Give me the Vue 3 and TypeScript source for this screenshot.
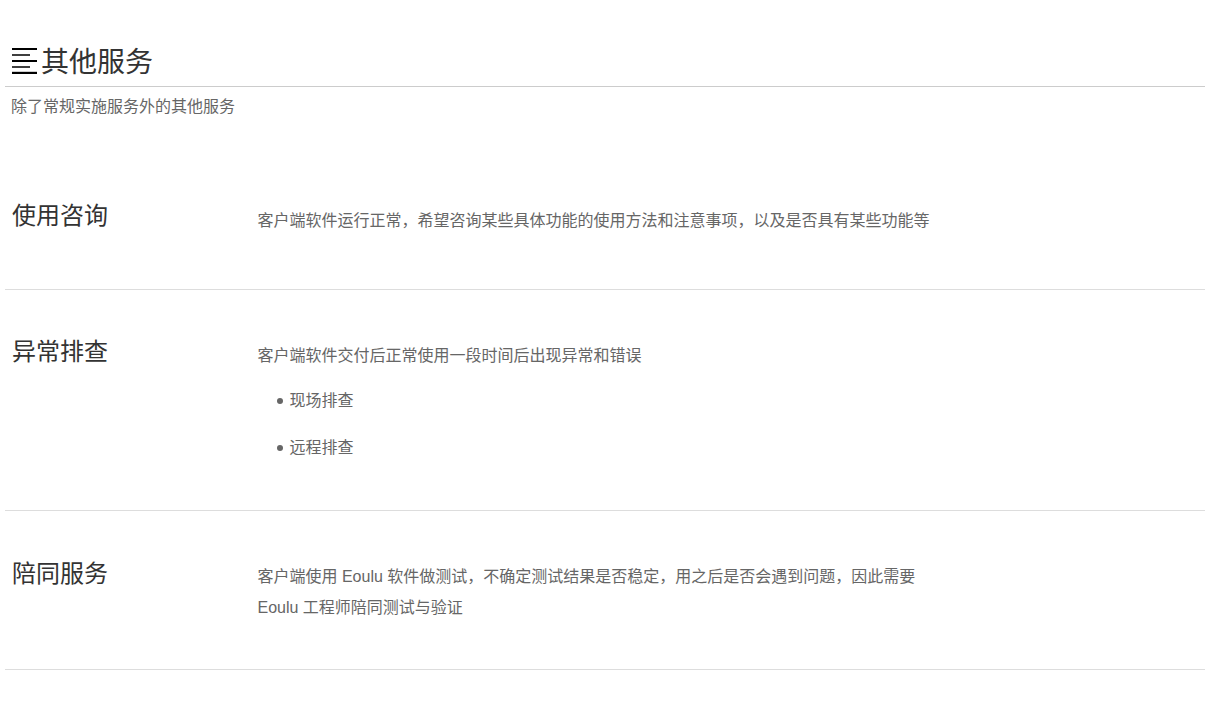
<script setup lang="ts">
interface Service { title: string; text: string; bullets?: string[] }
const services: Service[] = [
  { title: '使用咨询', text: '客户端软件运行正常\uff0c希望咨询某些具体功能的使用方法和注意事项\uff0c以及是否具有某些功能等' },
  { title: '异常排查', text: '客户端软件交付后正常使用一段时间后出现异常和错误', bullets: ['现场排查', '远程排查'] },
  { title: '陪同服务', text: '客户端使用 Eoulu 软件做测试\uff0c不确定测试结果是否稳定\uff0c用之后是否会遇到问题\uff0c因此需要 Eoulu 工程师陪同测试与验证' },
]
</script>

<template>
  <div class="page">
    <header class="head">
      <svg class="icon" width="25" height="26" viewBox="0 0 25 26">
        <path d="M0 1h25M0 13h25" stroke="#000" stroke-width="2" fill="none" />
        <path d="M0 7h18M0 19h18" stroke="#000" stroke-width="1.5" fill="none" />
        <path d="M0 25h25" stroke="#000" stroke-width="2.4" fill="none" />
      </svg>
      <h1>其他服务</h1>
    </header>
    <p class="sub">除了常规实施服务外的其他服务</p>
    <section v-for="s in services" :key="s.title" class="row">
      <h2>{{ s.title }}</h2>
      <div class="body">
        <p>{{ s.text }}</p>
        <ul v-if="s.bullets">
          <li v-for="b in s.bullets" :key="b">{{ b }}</li>
        </ul>
      </div>
    </section>
  </div>
</template>

<style>
body { background: #fff; }
</style>

<style scoped>
.page {
  width: 1200px;
  margin-left: 5px;
  padding-top: 36px;
  font-family: "Liberation Sans", "Noto Sans CJK SC", sans-serif;
  color: #666;
}
.head {
  display: flex;
  align-items: center;
  gap: 4px;
  height: 50px;
  padding-left: 7px;
  border-bottom: 1px solid #ccc;
}
h1 {
  margin: -2px 0 0;
  font-size: 28px;
  font-weight: 400;
  color: #333;
}
.sub {
  margin: 0 0 0 6px;
  padding-top: 9px;
  height: 58px;
  font-size: 16px;
  line-height: 22px;
}
.row {
  display: flex;
  padding: 45px 0 47px;
  border-bottom: 1px solid #ddd;
}
.row:nth-of-type(1) { padding: 46px 0 53px; }
.row:nth-of-type(3) { padding-bottom: 46px; }
h2 {
  flex: 0 0 252.5px;
  margin: 0;
  padding-left: 7px;
  box-sizing: border-box;
  font-size: 24px;
  font-weight: 400;
  line-height: 34px;
  color: #333;
}
.row:nth-of-type(1) h2 { margin-top: -1px; }
.row:nth-of-type(3) h2 { margin-top: 1px; }
.body { width: 680px; padding-top: 5px; }
.body p {
  margin: 0;
  font-size: 16px;
  line-height: 31px;
}
ul {
  margin: 0;
  padding: 0 0 0 19px;
  list-style: none;
}
li {
  display: flex;
  align-items: center;
  gap: 7px;
  font-size: 16px;
  line-height: 31px;
  margin-top: 16px;
}
li:first-child { margin-top: 14px; }
li::before {
  content: "";
  width: 6px;
  height: 6px;
  border-radius: 50%;
  background: #666;
}
</style>
